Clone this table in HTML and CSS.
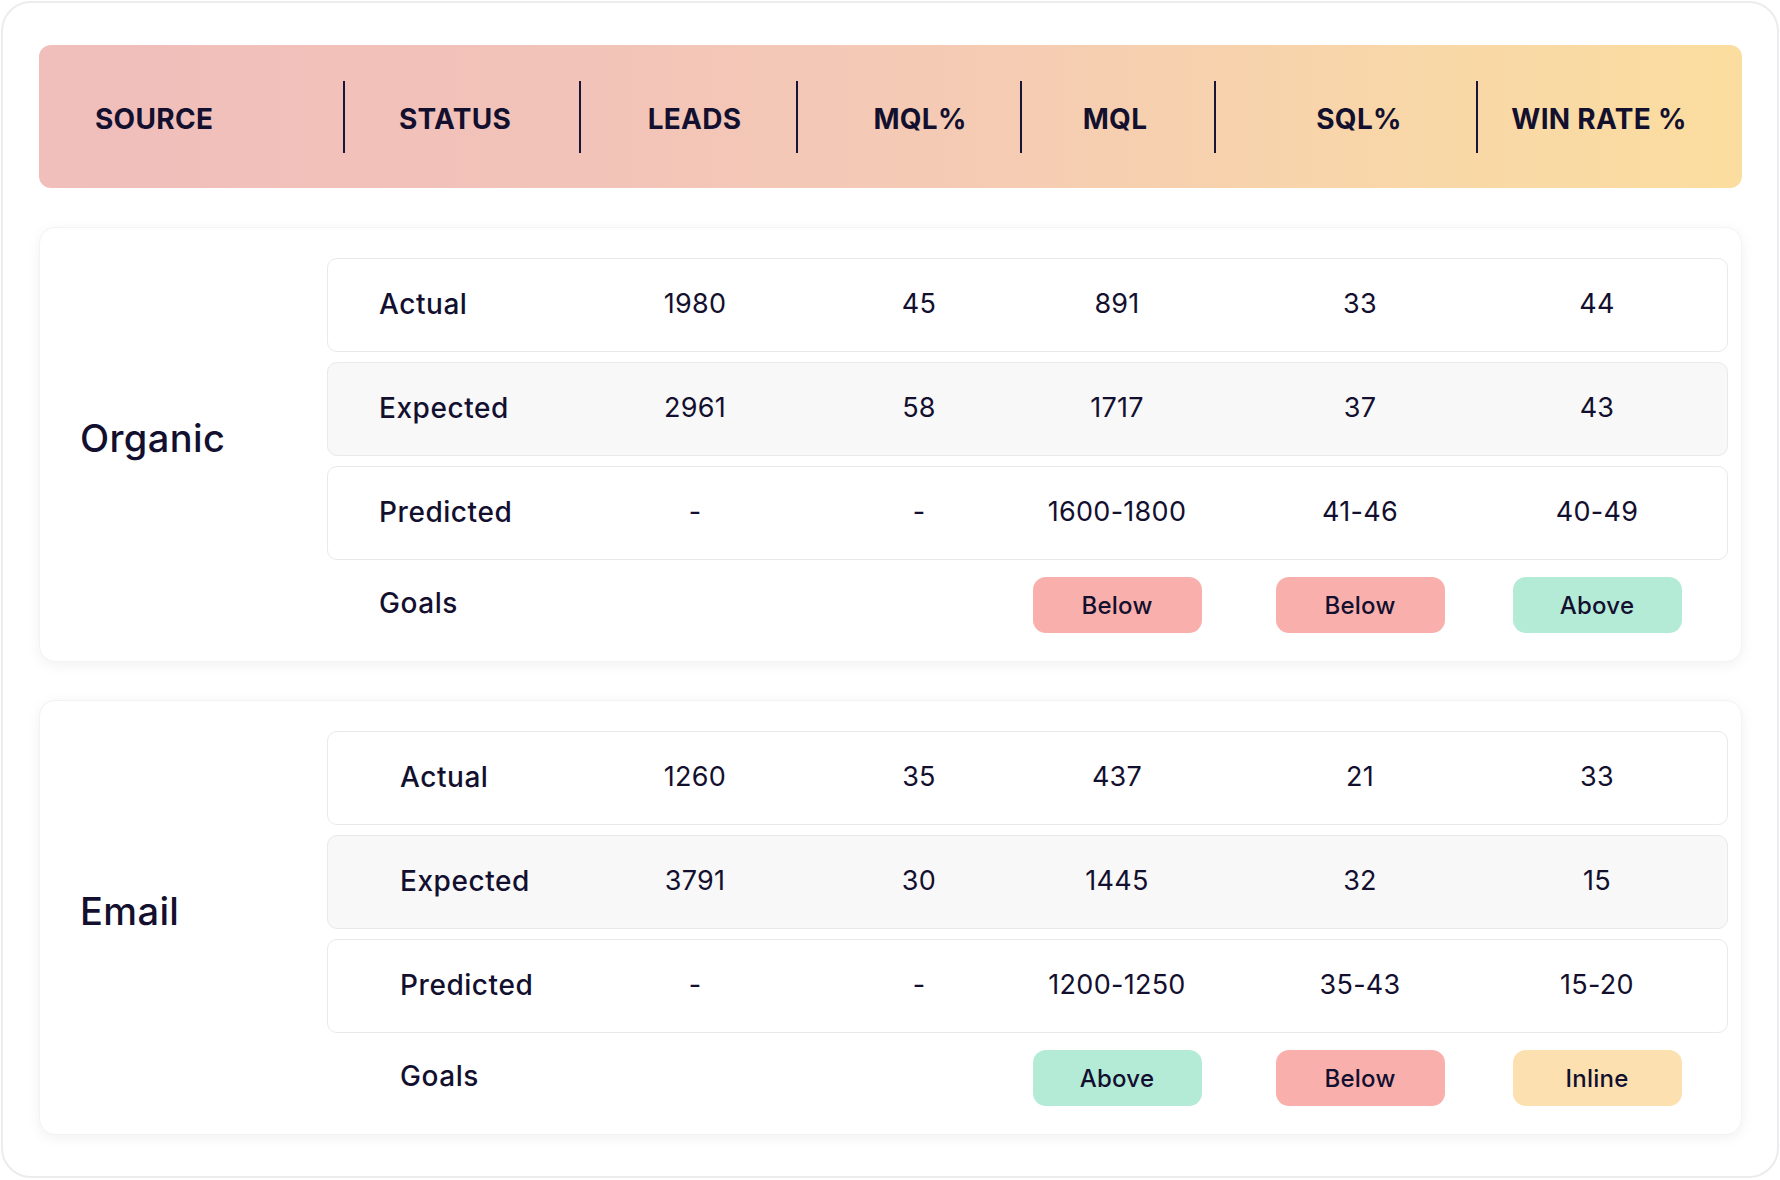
FILE: index.html
```html
<!DOCTYPE html>
<html lang="en">
<head>
<meta charset="utf-8">
<title>Lead funnel</title>
<link rel="stylesheet" href="styles.css">
</head>
<body>
<div class="frame">
  <div class="head">
    <div class="hcell hcell-source">SOURCE</div>
    <div class="hdiv"></div>
    <div class="hcell hcell-status">STATUS</div>
    <div class="hdiv"></div>
    <div class="hcell hcell-leads">LEADS</div>
    <div class="hdiv"></div>
    <div class="hcell hcell-mqlp">MQL%</div>
    <div class="hdiv"></div>
    <div class="hcell hcell-mql">MQL</div>
    <div class="hdiv"></div>
    <div class="hcell hcell-sqlp">SQL%</div>
    <div class="hdiv"></div>
    <div class="hcell hcell-win">WIN RATE %</div>
  </div>

  <section class="group">
    <div class="source">Organic</div>
    <div class="rows">
      <div class="row">
        <div class="lbl">Actual</div><div class="val">1980</div><div class="val">45</div><div class="val">891</div><div class="val val-sql">33</div><div class="val">44</div>
      </div>
      <div class="row row-alt">
        <div class="lbl">Expected</div><div class="val">2961</div><div class="val">58</div><div class="val">1717</div><div class="val val-sql">37</div><div class="val">43</div>
      </div>
      <div class="row">
        <div class="lbl">Predicted</div><div class="val">-</div><div class="val">-</div><div class="val">1600-1800</div><div class="val val-sql">41-46</div><div class="val">40-49</div>
      </div>
      <div class="row row-goals">
        <div class="lbl">Goals</div><div></div><div></div><div class="badge badge-below">Below</div><div class="val-sql badge-wrap"><div class="badge badge-below">Below</div></div><div class="badge badge-above">Above</div>
      </div>
    </div>
  </section>

  <section class="group group-email">
    <div class="source">Email</div>
    <div class="rows">
      <div class="row">
        <div class="lbl">Actual</div><div class="val">1260</div><div class="val">35</div><div class="val">437</div><div class="val val-sql">21</div><div class="val">33</div>
      </div>
      <div class="row row-alt">
        <div class="lbl">Expected</div><div class="val">3791</div><div class="val">30</div><div class="val">1445</div><div class="val val-sql">32</div><div class="val">15</div>
      </div>
      <div class="row">
        <div class="lbl">Predicted</div><div class="val">-</div><div class="val">-</div><div class="val">1200-1250</div><div class="val val-sql">35-43</div><div class="val">15-20</div>
      </div>
      <div class="row row-goals">
        <div class="lbl">Goals</div><div></div><div></div><div class="badge badge-above">Above</div><div class="val-sql badge-wrap"><div class="badge badge-below">Below</div></div><div class="badge badge-inline">Inline</div>
      </div>
    </div>
  </section>
</div>
</body>
</html>
```

FILE: styles.css
```css
* { box-sizing: border-box; }
html, body { margin: 0; padding: 0; background: #ffffff; }
body {
  padding: 1px;
  font-family: Inter, "Open Sans", "Liberation Sans", sans-serif;
  color: #13102f;
}
.frame {
  width: 1778px;
  height: 1177px;
  border: 2px solid #ececee;
  border-radius: 30px;
  background: #ffffff;
  padding: 42px 35px 0 36px;
  display: flex;
  flex-direction: column;
}
.head {
  height: 143px;
  border-radius: 12px;
  background: linear-gradient(90deg, #f0bebb 0%, #f2c3b9 30%, #f5cbb4 55%, #f8d6a9 78%, #fbdd9f 100%);
  display: grid;
  grid-template-columns: 304px 2px 234px 2px 215px 2px 222px 2px 192px 2px 260px 2px 1fr;
  align-items: center;
  font-weight: 700;
  font-size: 28px;
  letter-spacing: 0.01em;
}
.hdiv {
  width: 2px;
  height: 72px;
  background: #1a1438;
}
.hcell { text-align: center; padding-top: 5px; }
.hcell-source { text-align: left; padding-left: 56px; }
.hcell-status { padding-right: 14px; }
.hcell-leads { padding-left: 12px; }
.hcell-mqlp { padding-left: 22px; }
.hcell-mql { padding-right: 6px; }
.hcell-sqlp { padding-left: 26px; }
.hcell-win { padding-right: 22px; }

.group {
  margin-top: 39px;
  height: 435px;
  border-radius: 16px;
  background: #ffffff;
  border: 1px solid #f3f3f4;
  box-shadow: 0 3px 14px rgba(20, 20, 40, 0.06);
  display: grid;
  grid-template-columns: 287px 1fr;
  padding: 30px 13px 30px 0;
}
.group-email { margin-top: 38px; }
.source {
  align-self: center;
  padding: 0 0 15px 40px;
  font-size: 38px;
  font-weight: 500;
  letter-spacing: 0.01em;
}
.rows {
  display: flex;
  flex-direction: column;
  gap: 10px;
}
.row {
  height: 94px;
  flex: none;
  border: 1px solid #e9e9ec;
  border-radius: 10px;
  background: #ffffff;
  display: grid;
  grid-template-columns: 255px 224px 224px 172px 304px 180px 1fr;
  align-items: center;
  font-size: 27px;
}
.row-alt { background: #f8f8f9; }
.row-goals {
  border-color: transparent;
  background: transparent;
  height: 56px;
  margin-top: 6px;
}
.lbl {
  padding-left: 51px;
  padding-bottom: 3px;
  font-weight: 500;
  font-size: 28px;
  letter-spacing: 0.02em;
}
.group-email .lbl { padding-left: 72px; }
.row-goals .lbl { padding-bottom: 4px; }
.val {
  text-align: center;
  font-weight: 400;
  letter-spacing: 0.01em;
  padding-bottom: 3px;
}
.val-sql { padding-left: 10px; }
.badge-wrap { display: flex; justify-content: center; }
.badge {
  justify-self: center;
  width: 169px;
  height: 56px;
  border-radius: 13px;
  display: flex;
  align-items: center;
  justify-content: center;
  font-size: 24px;
  font-weight: 500;
  letter-spacing: 0.01em;
}
.badge-below { background: #f9afab; }
.badge-above { background: #b3ebd7; }
.badge-inline { background: #fde0b0; }
```
